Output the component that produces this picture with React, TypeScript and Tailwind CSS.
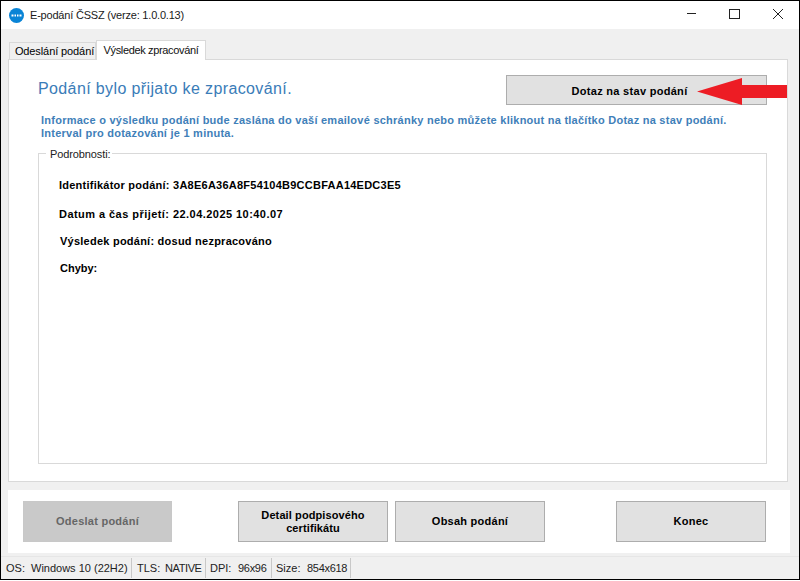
export default function App() {
  const ff = "font-['Liberation_Sans',Arial,sans-serif]";
  const btn = "h-[41px] w-[150px] border border-[#adadad] bg-[#e1e1e1] text-[11px] font-bold leading-[13px] text-black flex items-center justify-center text-center";
  return (
    <div className={`relative w-[800px] h-[581px] bg-white ${ff} overflow-hidden`}>
      <div className="w-[800px] h-[580px] border border-black bg-[#f0f0f0] flex flex-col">
        <div className="h-[28px] bg-white flex items-center shrink-0">
          <svg className="ml-[8px] w-[15px] h-[15px]" viewBox="0 0 15 15">
            <circle cx="7.5" cy="7.5" r="7.5" fill="#0a84d6" />
            <path d="M2.5 7.5h2M5.5 7.5h1.500M8 7.500h1.500M10.500 7.500h2" stroke="#ffffff" strokeWidth="2" />
          </svg>
          <span className="ml-[6px] text-[11px] tracking-[-0.2px] text-[#1a1a1a]">E-podání ČSSZ (verze: 1.0.0.13)</span>
          <div className="ml-auto flex items-center h-full">
            <svg className="w-[46px] h-[28px]" viewBox="0 0 46 28"><path d="M23 12.500h9" stroke="#222" /></svg>
            <svg className="w-[46px] h-[28px]" viewBox="0 0 46 28"><rect x="19.500" y="8.500" width="10" height="9" fill="none" stroke="#222" /></svg>
            <svg className="w-[43px] h-[28px]" viewBox="0 0 43 28"><path d="M17 8l10 10M27 8l-10 10" stroke="#222" /></svg>
          </div>
        </div>
        <div className="flex items-end h-[30px] pl-[8px] shrink-0">
          <div className="h-[17px] w-[87px] bg-[#f0f0f0] border border-b-0 border-[#d9d9d9] text-[11px] tracking-[-0.1px] pl-[4px] text-black flex items-center justify-center">Odeslání podání</div>
          <div className="h-[20px] w-[110px] bg-white border border-b-0 border-[#d9d9d9] text-[11px] tracking-[-0.35px] text-[#111] flex items-center justify-center -mb-px relative z-10">Výsledek zpracování</div>
        </div>
        <div className="ml-[7px] w-[780px] h-[423px] bg-white border border-[#d9d9d9] shrink-0 px-[29px] flex flex-col">
          <div className="flex items-start h-[51px] pt-[15px]">
            <div className="mt-[5px] text-[16px] leading-[18px] text-[#3a7cb8] tracking-[0.38px]">Podání bylo přijato ke zpracování.</div>
            <div className="ml-auto mr-[-9px] w-[261px] h-[30px] border border-[#adadad] bg-[#e1e1e1] text-[11px] font-bold text-black flex items-center justify-center pr-[14px] pt-[2px] tracking-[0.3px]">Dotaz na stav podání</div>
          </div>
          <div className="ml-[3px] mt-[3px] text-[11px] font-bold leading-[13px] text-[#3f80b9] tracking-[0.25px] whitespace-nowrap">
            Informace o výsledku podání bude zaslána do vaší emailové schránky nebo můžete kliknout na tlačítko Dotaz na stav podání.
            <br />
            Interval pro dotazování je 1 minuta.
          </div>
          <fieldset className="mt-[13px] w-[729px] h-[311px] border border-[#d9d9d9] pl-[20px] text-[11px] font-bold text-black tracking-[0.24px]">
            <legend className="ml-[-13px] px-[1px] font-normal text-[11px] leading-[1px] text-[#222] tracking-[-0.1px] relative top-[1px]">&nbsp;Podrobnosti:</legend>
            <div className="mt-[25px] leading-[13px]">Identifikátor podání: 3A8E6A36A8F54104B9CCBFAA14EDC3E5</div>
            <div className="mt-[16px] leading-[13px] tracking-[0.45px]">Datum a čas přijetí: 22.04.2025 10:40.07</div>
            <div className="mt-[14px] ml-[1px] leading-[13px]">Výsledek podání: dosud nezpracováno</div>
            <div className="mt-[14px] ml-[1px] leading-[13px] tracking-normal">Chyby:</div>
          </fieldset>
        </div>
        <div className="mt-[8px] ml-[7px] w-[782px] h-[63px] bg-white shrink-0 flex items-center pl-[15px]">
          <div className="h-[41px] w-[149px] border border-[#c8c8c8] bg-[#c9c9c9] text-[11px] font-bold text-[#666] flex items-center justify-center tracking-[0.25px]">Odeslat podání</div>
          <div className={`${btn} ml-[66px] tracking-[0.1px]`}>Detail podpisového<br />certifikátu</div>
          <div className={`${btn} ml-[7px] tracking-[0.25px]`}>Obsah podání</div>
          <div className={`${btn} ml-[71px] tracking-[0.25px]`}>Konec</div>
        </div>
        <div className="mt-[3px] flex-1 border-t border-[#e6e6e6] bg-[#f0f0f0] flex items-stretch text-[11px] text-[#222] pt-[1px] pb-[1px]">
          <div className="w-[131px] pl-[5px] border-r border-[#c8c8c8] flex items-center"><span className="w-[25px]">OS:</span><span>Windows 10 (22H2)</span></div>
          <div className="w-[74px] pl-[5px] border-r border-[#c8c8c8] flex items-center"><span className="w-[28px]">TLS:</span><span className="tracking-[-0.4px]">NATIVE</span></div>
          <div className="w-[66px] pl-[4px] border-r border-[#c8c8c8] flex items-center"><span className="w-[28px]">DPI:</span><span className="tracking-[-0.3px]">96x96</span></div>
          <div className="w-[79px] pl-[4px] border-r border-[#c8c8c8] flex items-center"><span className="w-[31px]">Size:</span><span className="tracking-[-0.3px]">854x618</span></div>
        </div>
      </div>
      <svg className="absolute left-[697px] top-[78px] w-[90px] h-[27px]" viewBox="0 0 90 27">
        <path d="M0 13.500L45 0V7H90V20H45V27Z" fill="#ed1c24" />
      </svg>
    </div>
  );
}
